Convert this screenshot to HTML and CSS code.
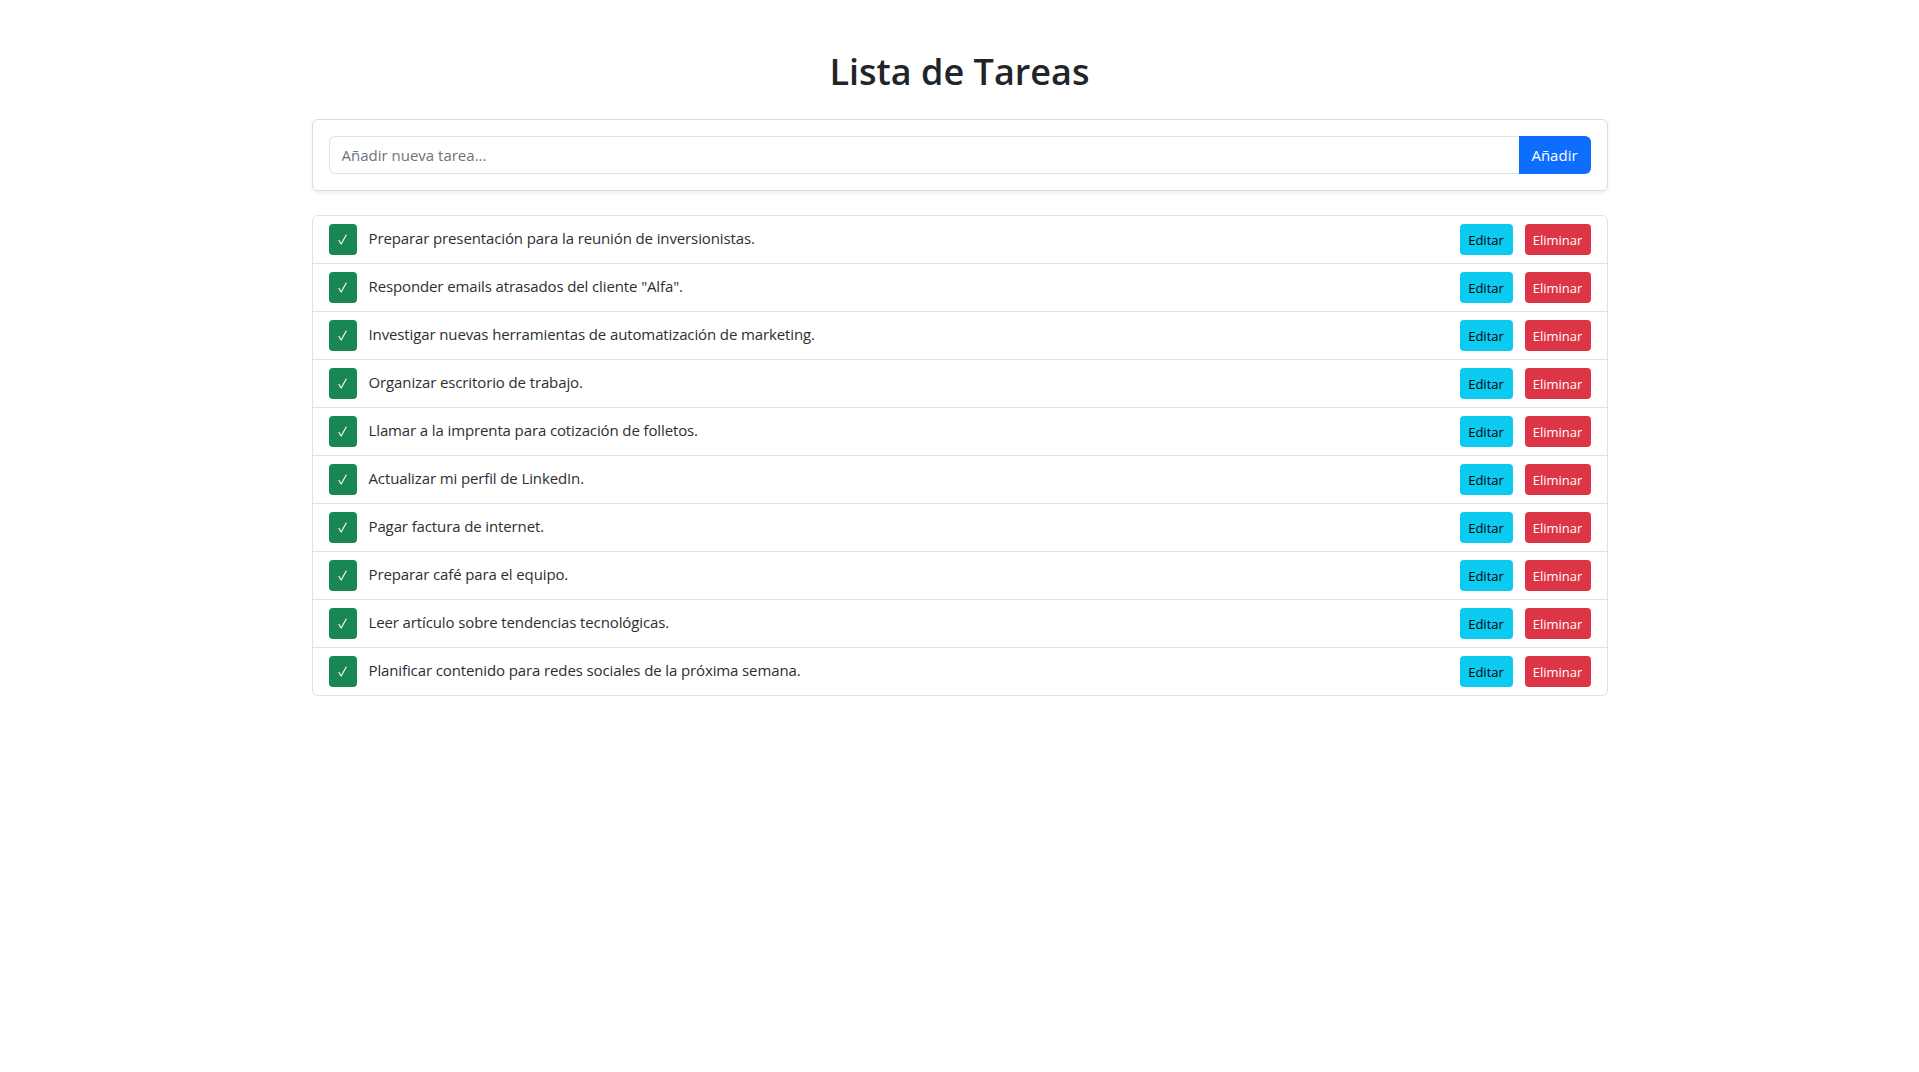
FILE: index.html
```html
<!DOCTYPE html>
<html lang="es">
<head>
<meta charset="utf-8">
<title>Lista de Tareas</title>
<link rel="stylesheet" href="styles.css">
</head>
<body>
<div class="container">
  <h1 class="title">Lista de Tareas</h1>
  <div class="card">
    <div class="input-group">
      <input class="form-control" type="text" placeholder="Añadir nueva tarea...">
      <button class="btn-add">Añadir</button>
    </div>
  </div>
  <ul class="list">
    <li class="item"><div class="left"><button class="check"><svg viewBox="0 0 9 11" width="9" height="11"><polyline points="1,6.5 3.2,10 8.2,1"/></svg></button><span class="task">Preparar presentación para la reunión de inversionistas.</span></div><div class="actions"><button class="btn-sm info">Editar</button><button class="btn-sm danger">Eliminar</button></div></li>
    <li class="item"><div class="left"><button class="check"><svg viewBox="0 0 9 11" width="9" height="11"><polyline points="1,6.5 3.2,10 8.2,1"/></svg></button><span class="task">Responder emails atrasados del cliente "Alfa".</span></div><div class="actions"><button class="btn-sm info">Editar</button><button class="btn-sm danger">Eliminar</button></div></li>
    <li class="item"><div class="left"><button class="check"><svg viewBox="0 0 9 11" width="9" height="11"><polyline points="1,6.5 3.2,10 8.2,1"/></svg></button><span class="task">Investigar nuevas herramientas de automatización de marketing.</span></div><div class="actions"><button class="btn-sm info">Editar</button><button class="btn-sm danger">Eliminar</button></div></li>
    <li class="item"><div class="left"><button class="check"><svg viewBox="0 0 9 11" width="9" height="11"><polyline points="1,6.5 3.2,10 8.2,1"/></svg></button><span class="task">Organizar escritorio de trabajo.</span></div><div class="actions"><button class="btn-sm info">Editar</button><button class="btn-sm danger">Eliminar</button></div></li>
    <li class="item"><div class="left"><button class="check"><svg viewBox="0 0 9 11" width="9" height="11"><polyline points="1,6.5 3.2,10 8.2,1"/></svg></button><span class="task">Llamar a la imprenta para cotización de folletos.</span></div><div class="actions"><button class="btn-sm info">Editar</button><button class="btn-sm danger">Eliminar</button></div></li>
    <li class="item"><div class="left"><button class="check"><svg viewBox="0 0 9 11" width="9" height="11"><polyline points="1,6.5 3.2,10 8.2,1"/></svg></button><span class="task">Actualizar mi perfil de LinkedIn.</span></div><div class="actions"><button class="btn-sm info">Editar</button><button class="btn-sm danger">Eliminar</button></div></li>
    <li class="item"><div class="left"><button class="check"><svg viewBox="0 0 9 11" width="9" height="11"><polyline points="1,6.5 3.2,10 8.2,1"/></svg></button><span class="task">Pagar factura de internet.</span></div><div class="actions"><button class="btn-sm info">Editar</button><button class="btn-sm danger">Eliminar</button></div></li>
    <li class="item"><div class="left"><button class="check"><svg viewBox="0 0 9 11" width="9" height="11"><polyline points="1,6.5 3.2,10 8.2,1"/></svg></button><span class="task">Preparar café para el equipo.</span></div><div class="actions"><button class="btn-sm info">Editar</button><button class="btn-sm danger">Eliminar</button></div></li>
    <li class="item"><div class="left"><button class="check"><svg viewBox="0 0 9 11" width="9" height="11"><polyline points="1,6.5 3.2,10 8.2,1"/></svg></button><span class="task">Leer artículo sobre tendencias tecnológicas.</span></div><div class="actions"><button class="btn-sm info">Editar</button><button class="btn-sm danger">Eliminar</button></div></li>
    <li class="item"><div class="left"><button class="check"><svg viewBox="0 0 9 11" width="9" height="11"><polyline points="1,6.5 3.2,10 8.2,1"/></svg></button><span class="task">Planificar contenido para redes sociales de la próxima semana.</span></div><div class="actions"><button class="btn-sm info">Editar</button><button class="btn-sm danger">Eliminar</button></div></li>
  </ul>
</div>
</body>
</html>
```

FILE: styles.css
```css
* { box-sizing: border-box; }
body {
  margin: 0;
  font-family: "Open Sans", "Noto Sans", sans-serif;
  font-size: 15px;
  color: #212529;
  background: #fff;
}
.container {
  max-width: 1296px;
  margin: 48px auto 0;
}
.title {
  text-align: center;
  font-size: 36px;
  font-weight: 600;
  line-height: 48px;
  margin: 0 0 23px;
  color: #212529;
}
.card {
  border: 1px solid #dcdcdc;
  border-radius: 6px;
  box-shadow: 0 2px 4px rgba(0,0,0,.075);
  padding: 16px;
  margin-bottom: 24px;
}
.input-group { display: flex; }
.form-control {
  flex: 1;
  height: 38px;
  border: 1px solid #dee2e6;
  border-right: none;
  border-radius: 6px 0 0 6px;
  padding: 6px 12px;
  font: inherit;
  font-size: 15px;
  color: #212529;
  outline: none;
}
.form-control::placeholder { color: #6c757d; }
.btn-add {
  width: 72px;
  height: 38px;
  border: none;
  background: #0d6efd;
  color: #fff;
  border-radius: 0 6px 6px 0;
  font-family: inherit;
  font-size: 15px;
}
.list {
  list-style: none;
  margin: 0;
  padding: 0;
  border: 1px solid #dee2e6;
  border-radius: 6px;
}
.item {
  display: flex;
  align-items: center;
  justify-content: space-between;
  padding: 8px 16px;
}
.item + .item { border-top: 1px solid #dee2e6; }
.left { display: flex; align-items: center; }
.check {
  width: 28px;
  height: 31px;
  padding: 0;
  border: none;
  border-radius: 4px;
  background: #198754;
  display: flex;
  align-items: center;
  justify-content: center;
  margin-right: 12px;
}
.check svg {
  fill: none;
  stroke: #fff;
  stroke-width: 1.1;
  stroke-linecap: round;
  stroke-linejoin: round;
}
.task {
  font-size: 15px;
  letter-spacing: -0.12px;
  padding-bottom: 4px;
  color: #2b2f33;
}
.actions { display: flex; gap: 12px; }
.btn-sm {
  height: 31px;
  padding: 0;
  border: none;
  border-radius: 4px;
  font-family: inherit;
  font-size: 13px;
}
.info { background: #0dcaf0; color: #000; width: 53px; }
.danger { background: #dc3545; color: #fff; width: 66px; }
```
